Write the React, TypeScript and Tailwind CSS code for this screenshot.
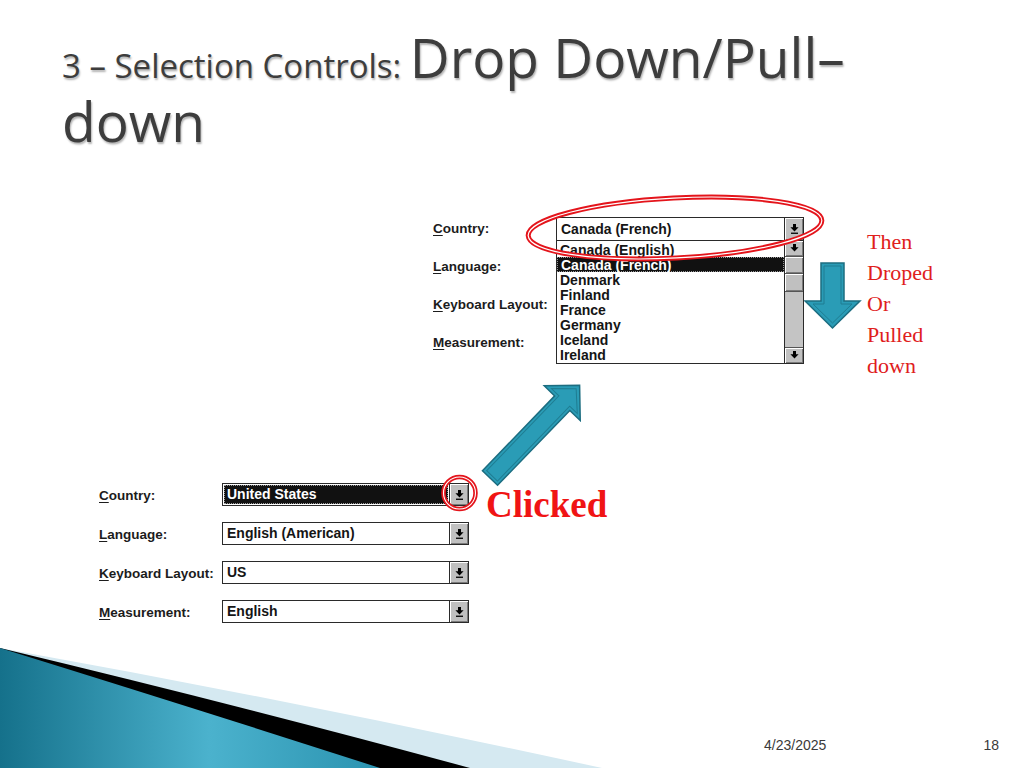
import React from 'react';

const ui = "font-['Liberation_Sans',Arial,sans-serif]";

function DropGlyph({ bar = true }: { bar?: boolean }) {
  return (
    <svg width="9" height="10" viewBox="0 0 9 10">
      <path d="M3 0h3v3.2h2.6L4.5 7.4 0.4 3.2H3z" fill="#000" />
      {bar && <rect x="1" y="8.6" width="7" height="1.3" fill="#000" />}
    </svg>
  );
}

function BevelBox({ className = '', children }: { className?: string; children?: React.ReactNode }) {
  return (
    <div
      className={`flex items-center justify-center bg-[#c0c0c0] shadow-[inset_1px_1px_0_#fff,inset_-1px_-1px_0_#7a7a7a] ${className}`}
    >
      {children}
    </div>
  );
}

function Label({ text }: { text: string }) {
  return (
    <span className={`${ui} text-[13.5px] font-bold text-[#1c1c1c]`}>
      <span className="underline underline-offset-2">{text[0]}</span>
      {text.slice(1)}
    </span>
  );
}

function Combo({ value, selected = false }: { value: string; selected?: boolean }) {
  return (
    <div className="flex h-[23px] w-[247px] border border-[#2a2a2a] bg-white">
      <div className="flex flex-1 p-px">
        {selected ? (
          <div className="flex flex-1 items-center border border-dotted border-[#9a9a9a] bg-[#111] px-[2px]">
            <span className={`${ui} text-[14px] font-bold text-white`}>{value}</span>
          </div>
        ) : (
          <div className="flex flex-1 items-center px-[3px]">
            <span className={`${ui} text-[14px] font-bold text-[#151515]`}>{value}</span>
          </div>
        )}
      </div>
      <BevelBox className="w-[19px] border-l border-[#2a2a2a]">
        <DropGlyph />
      </BevelBox>
    </div>
  );
}

const countries = [
  'Canada (English)',
  'Canada (French)',
  'Denmark',
  'Finland',
  'France',
  'Germany',
  'Iceland',
  'Ireland',
];

function OpenCombo() {
  return (
    <div className="flex w-[248px] flex-col">
      <div className="flex h-[24px] border border-[#2a2a2a] bg-white">
        <div className="flex flex-1 items-center px-[4px]">
          <span className={`${ui} text-[14px] font-bold text-[#151515]`}>Canada (French)</span>
        </div>
        <BevelBox className="w-[19px] border-l border-[#2a2a2a]">
          <DropGlyph />
        </BevelBox>
      </div>
      <div className="flex h-[123px] border border-t-0 border-[#2a2a2a] bg-white">
        <div className="flex flex-1 flex-col pt-px">
          {countries.map((c) => (
            <div
              key={c}
              className={`flex h-[15px] items-center px-[3px] ${
                c === 'Canada (French)' ? 'border border-dotted border-[#999] bg-[#111]' : ''
              }`}
            >
              <span
                className={`${ui} text-[14px] font-bold leading-none ${
                  c === 'Canada (French)' ? 'text-white' : 'text-[#151515]'
                }`}
              >
                {c}
              </span>
            </div>
          ))}
        </div>
        <div className="flex w-[19px] flex-col border-l border-[#2a2a2a] bg-[#c4c4c4]">
          <BevelBox className="h-[16px] border-b border-[#555]">
            <DropGlyph bar={false} />
          </BevelBox>
          <BevelBox className="h-[17px] border-b border-[#555]" />
          <BevelBox className="h-[18px] border-b border-[#555]" />
          <div className="flex-1" />
          <BevelBox className="h-[16px] border-t border-[#555]">
            <DropGlyph bar={false} />
          </BevelBox>
        </div>
      </div>
    </div>
  );
}

function DownArrow() {
  return (
    <svg width="58" height="68" viewBox="0 0 58 68">
      <path
        d="M17 1h23v38h16L28.5 66 1 39h16z"
        fill="#2a9cb6"
        stroke="#1c6d80"
        strokeWidth="1.5"
        strokeLinejoin="miter"
      />
      <path d="M20 4h17v38h11L28.5 61 9 42h11z" fill="none" stroke="#1f7d92" strokeWidth="1" />
    </svg>
  );
}

function Overlay() {
  return (
    <svg className="pointer-events-none absolute inset-0" width="1024" height="768" viewBox="0 0 1024 768">
      {/* red ellipse around open combo */}
      <g transform="rotate(-3 675 228)">
        <ellipse cx="675" cy="228" rx="147" ry="30" fill="none" stroke="#e4141b" strokeWidth="5" />
        <ellipse cx="675" cy="228" rx="147" ry="30" fill="none" stroke="#fff" strokeWidth="1.2" />
      </g>
      {/* red circle around clicked button */}
      <circle cx="459.5" cy="493" r="16" fill="none" stroke="#e4141b" strokeWidth="4.5" />
      <circle cx="459.5" cy="493" r="16" fill="none" stroke="#fff" strokeWidth="1.1" />
      {/* up-right arrow */}
      <g transform="translate(490 478) rotate(-46)">
        <path
          d="M0 -10.5H104V-25L129 0 104 25V10.5H0z"
          fill="#2a9cb6"
          stroke="#1c6d80"
          strokeWidth="1.5"
        />
        <path d="M3 -7.5H107V-18L124 0 107 18V7.5H3z" fill="none" stroke="#1f7d92" strokeWidth="1" />
      </g>
    </svg>
  );
}

function Corner() {
  return (
    <svg className="absolute bottom-0 left-0" width="620" height="125" viewBox="0 643 620 125">
      <defs>
        <linearGradient id="teal" x1="0" y1="0" x2="1" y2="0">
          <stop offset="0" stopColor="#15718b" />
          <stop offset="0.55" stopColor="#4bb2cd" />
          <stop offset="1" stopColor="#2b93b0" />
        </linearGradient>
      </defs>
      <path d="M0 648Q300 702 602 768H0z" fill="#d5e9f1" />
      <path d="M0 648Q250 708 470 768H0z" fill="#000" />
      <path d="M0 648Q200 710 380 768H0z" fill="url(#teal)" />
    </svg>
  );
}

export default function App() {
  const upper = ['Country:', 'Language:', 'Keyboard Layout:', 'Measurement:'];
  const lower: { label: string; value: string; selected?: boolean }[] = [
    { label: 'Country:', value: 'United States', selected: true },
    { label: 'Language:', value: 'English (American)' },
    { label: 'Keyboard Layout:', value: 'US' },
    { label: 'Measurement:', value: 'English' },
  ];

  return (
    <div className="relative flex h-[768px] w-[1024px] flex-col overflow-hidden bg-white">
      <Corner />

      <h1 className="relative pl-[62px] pt-[25px] font-['Open_Sans',sans-serif] text-[55px] font-normal leading-[64px] text-[#3d3d3d] [text-shadow:1px_2px_2px_rgba(0,0,0,0.3)]">
        <div className="h-[64px] whitespace-nowrap">
          <span className="text-[33px] leading-none">3 – Selection Controls: </span>
          Drop Down/Pull–
        </div>
        <div className="h-[64px]">down</div>
      </h1>

      <div className="relative mt-[57px] flex h-[265px] pl-[433px]">
        <div className="flex w-[123px] flex-col">
          {upper.map((l) => (
            <div key={l} className="flex h-[38px] items-center">
              <Label text={l} />
            </div>
          ))}
        </div>
        <div className="mt-[7px]">
          <OpenCombo />
        </div>
        <div className="mt-[52px]">
          <DownArrow />
        </div>
        <div className="ml-[5px] mt-[16px] flex flex-col font-['Liberation_Serif',serif] text-[22px] leading-[31px] text-[#e0201c]">
          <span>Then</span>
          <span>Droped</span>
          <span>Or</span>
          <span>Pulled</span>
          <span>down</span>
        </div>
      </div>

      <div className="relative flex pl-[99px]">
        <div className="flex flex-col">
          {lower.map((r) => (
            <div key={r.label} className="flex h-[39px] items-center">
              <div className="w-[123px]">
                <Label text={r.label} />
              </div>
              <Combo value={r.value} selected={r.selected} />
            </div>
          ))}
        </div>
        <span className="ml-[17px] mt-[8px] font-['Liberation_Serif',serif] text-[37px] font-bold leading-[44px] text-[#f01414]">
          Clicked
        </span>
      </div>

      <div className="flex-1" />

      <div className={`relative flex pb-[14px] pl-[764px] pr-[25px] ${ui} text-[14px] leading-[18px] text-[#3a3a3a]`}>
        <span>4/23/2025</span>
        <span className="ml-auto">18</span>
      </div>

      <Overlay />
    </div>
  );
}
